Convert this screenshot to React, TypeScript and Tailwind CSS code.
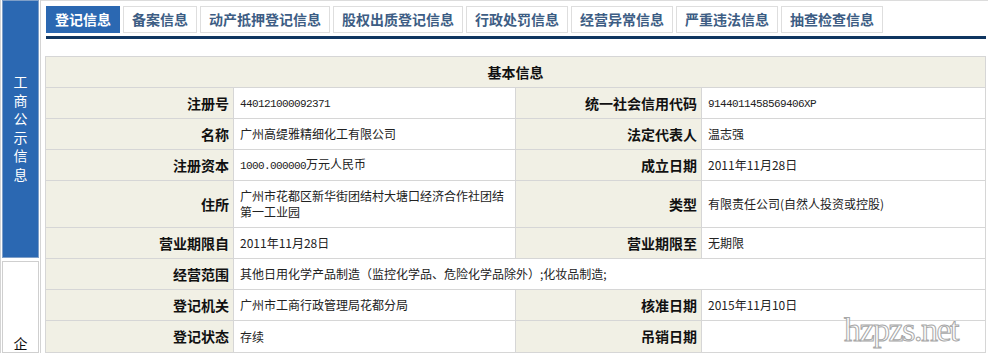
const tabs = ['登记信息', '备案信息', '动产抵押登记信息', '股权出质登记信息', '行政处罚信息', '经营异常信息', '严重违法信息', '抽查检查信息'];

const cjk = "font-['Noto_Sans_CJK_SC',sans-serif]";
const mono = "font-['Liberation_Mono',monospace] text-[11px] tracking-[-0.6px]";

function Label({ children }: { children: React.ReactNode }) {
  return (
    <td className="bg-[#f1f0e5] border border-[#d6d6d6] text-right pr-[4px] font-bold text-[14px] text-[#111]">
      {children}
    </td>
  );
}

function Value({ children, span }: { children?: React.ReactNode; span?: number }) {
  return (
    <td colSpan={span} className="bg-white border border-[#d6d6d6] pl-[6px] pr-[6px] text-[12px] text-[#222] leading-[16px]">
      {children}
    </td>
  );
}

export default function App() {
  return (
    <div className={`w-[988px] h-[353px] overflow-hidden flex bg-white ${cjk}`}>
      {/* left side nav */}
      <div className="w-[41px] shrink-0 flex flex-col border-l border-r border-[#d4d4d4] px-[1px]">
        <div className="h-[258px] shrink-0 bg-[#2b68b2] border border-[#7f9fc8] flex flex-col items-center pt-[71px] text-white text-[14px] leading-[18.6px]">
          {'工商公示信息'.split('').map((c) => (
            <span key={c}>{c}</span>
          ))}
        </div>
        <div className="mt-[3px] flex-1 min-h-0 overflow-hidden border border-[#cfcfcf] flex flex-col items-center pt-[72px] text-[#111] text-[14px] leading-[18.6px]">
          <span>企</span>
        </div>
      </div>

      {/* main content */}
      <div className="flex-1 border-t border-[#dcdcdc] pl-[4px] pr-[2px] relative">
        <div className="pl-[1px] pt-[5px]">
          <div className="flex gap-[3px]">
            {tabs.map((t, i) => (
              <div
                key={t}
                className={`h-[27px] px-[8px] flex items-center text-[14px] font-bold border ${
                  i === 0
                    ? 'bg-[#2b68b2] text-white border-[#2b68b2]'
                    : 'bg-white text-[#3d5d84] border-[#dedede]'
                }`}
              >
                {t}
              </div>
            ))}
          </div>
          <div className="mt-[3px] h-[3px] bg-[#0f3560]" />
        </div>

        <table className="mt-[17px] w-[940px] table-fixed border-collapse">
          <colgroup>
            <col className="w-[188px]" />
            <col className="w-[282px]" />
            <col className="w-[186px]" />
            <col className="w-[284px]" />
          </colgroup>
          <tbody>
            <tr className="h-[31px]">
              <td colSpan={4} className="bg-[#f1f0e5] border border-[#d6d6d6] text-center font-bold text-[14px] text-[#111]">
                基本信息
              </td>
            </tr>
            <tr className="h-[31px]">
              <Label>注册号</Label>
              <Value><span className={mono}>440121000092371</span></Value>
              <Label>统一社会信用代码</Label>
              <Value><span className={mono}>9144011458569406XP</span></Value>
            </tr>
            <tr className="h-[31px]">
              <Label>名称</Label>
              <Value>广州高缇雅精细化工有限公司</Value>
              <Label>法定代表人</Label>
              <Value>温志强</Value>
            </tr>
            <tr className="h-[31px]">
              <Label>注册资本</Label>
              <Value><span className={mono}>1000.000000</span>万元人民币</Value>
              <Label>成立日期</Label>
              <Value>2011年11月28日</Value>
            </tr>
            <tr className="h-[47px]">
              <Label>住所</Label>
              <Value>广州市花都区新华街团结村大塘口经济合作社团结<br />第一工业园</Value>
              <Label>类型</Label>
              <Value>有限责任公司(自然人投资或控股)</Value>
            </tr>
            <tr className="h-[31px]">
              <Label>营业期限自</Label>
              <Value>2011年11月28日</Value>
              <Label>营业期限至</Label>
              <Value>无期限</Value>
            </tr>
            <tr className="h-[31px]">
              <Label>经营范围</Label>
              <Value span={3}>其他日用化学产品制造（监控化学品、危险化学品除外）;化妆品制造;</Value>
            </tr>
            <tr className="h-[31px]">
              <Label>登记机关</Label>
              <Value>广州市工商行政管理局花都分局</Value>
              <Label>核准日期</Label>
              <Value>2015年11月10日</Value>
            </tr>
            <tr className="h-[32px]">
              <Label>登记状态</Label>
              <Value>存续</Value>
              <Label>吊销日期</Label>
              <Value />
            </tr>
          </tbody>
        </table>

        {/* watermark */}
        <div className="absolute left-[803px] top-[312px] font-['Liberation_Serif',serif] text-[34px] leading-[34px] text-white [-webkit-text-stroke:1px_#a8a8a8] tracking-[-1.5px] select-none">
          hzpzs.net
        </div>
      </div>
    </div>
  );
}
